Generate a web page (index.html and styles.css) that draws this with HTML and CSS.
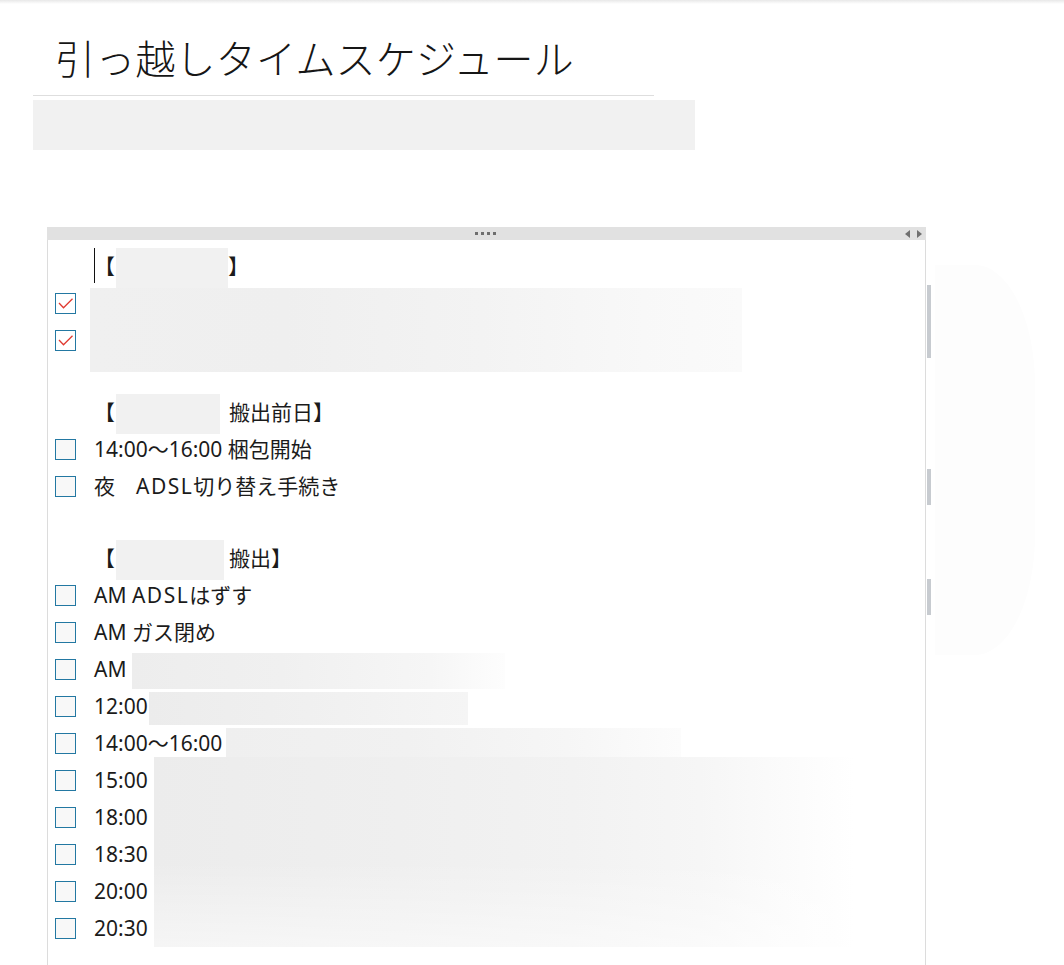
FILE: index.html
```html
<!DOCTYPE html>
<html lang="ja">
<head>
<meta charset="utf-8">
<title>引っ越しタイムスケジュール</title>
<link rel="stylesheet" href="styles.css">
</head>
<body>
<div class="topshade"></div>
<header class="page-header">
  <h1 class="title">引っ越しタイムスケジュール</h1>
</header>
<div class="redact redact-subtitle"></div>

<section class="panel">
  <div class="panel-bar">
    <span class="grip"><i></i><i></i><i></i><i></i></span>
    <svg class="arrows" width="17" height="8" viewBox="0 0 17 8"><polygon points="5,0 0,4 5,8" /><polygon points="12,0 17,4 12,8" /></svg>
  </div>
  <div class="panel-body">
    <div class="line heading has-caret">【<span class="redact rh rh1"></span>】</div>
    <div class="line item"><span class="box checked"><svg viewBox="0 0 21 21" width="21" height="21"><polyline points="4,10 8.5,14.8 17.5,5.8" /></svg></span><span class="txt"></span></div>
    <div class="line item"><span class="box checked"><svg viewBox="0 0 21 21" width="21" height="21"><polyline points="4,10 8.5,14.8 17.5,5.8" /></svg></span><span class="txt"></span></div>
    <div class="line blank"></div>
    <div class="line heading">【<span class="redact rh rh2"></span>搬出前日】</div>
    <div class="line item"><span class="box"></span><span class="txt">14:00〜16:00 梱包開始</span></div>
    <div class="line item"><span class="box"></span><span class="txt">夜　<span class="wide">ADSL</span>切り替え手続き</span></div>
    <div class="line blank"></div>
    <div class="line heading">【<span class="redact rh rh3"></span>搬出】</div>
    <div class="line item"><span class="box"></span><span class="txt">AM <span class="wide">ADSL</span>はずす</span></div>
    <div class="line item"><span class="box"></span><span class="txt">AM ガス閉め</span></div>
    <div class="line item"><span class="box"></span><span class="txt">AM<span class="redact ri ri-am"></span></span></div>
    <div class="line item"><span class="box"></span><span class="txt">12:00<span class="redact ri ri-12"></span></span></div>
    <div class="line item"><span class="box"></span><span class="txt">14:00〜16:00<span class="redact ri ri-14"></span></span></div>
    <div class="line item"><span class="box"></span><span class="txt">15:00</span></div>
    <div class="line item"><span class="box"></span><span class="txt">18:00</span></div>
    <div class="line item"><span class="box"></span><span class="txt">18:30</span></div>
    <div class="line item"><span class="box"></span><span class="txt">20:00</span></div>
    <div class="line item"><span class="box"></span><span class="txt">20:30</span></div>

    <div class="redact block block-a"></div>
    <div class="redact block block-b"></div>
  </div>
  <span class="scroll-mark m1"></span>
  <span class="scroll-mark m2"></span>
  <span class="scroll-mark m3"></span>
</section>
<div class="ghost"></div>
</body>
</html>
```

FILE: styles.css
```css
html, body {
  margin: 0;
  padding: 0;
  background: #ffffff;
}

body {
  position: relative;
  font-family: "Noto Sans", "Noto Sans CJK JP", sans-serif;
  color: #1b1b1b;
  overflow: hidden;
  min-height: 965px;
}

.topshade {
  height: 4px;
  background: linear-gradient(to bottom, #e8e8e8, #ffffff);
}

.page-header {
  margin-left: 33px;
  width: 621px;
  padding: 29px 0 14px 22px;
  box-sizing: border-box;
  border-bottom: 1px solid #dedede;
}

.title {
  margin: 0;
  font-family: "Noto Sans CJK JP", sans-serif;
  font-weight: 300;
  font-size: 40px;
  line-height: 48px;
  color: #161616;
  letter-spacing: 0.2px;
}

.redact-subtitle {
  margin: 4px 0 0 33px;
  width: 662px;
  height: 50px;
  background: linear-gradient(90deg, #f5f5f5 0%, #f2f2f2 35%, #f4f4f4 60%, #f9f9f9 80%, #fdfdfd 92%, #ffffff 100%);
}

.panel {
  position: relative;
  margin: 77px 0 0 47px;
  width: 879px;
  box-sizing: border-box;
  border-left: 1px solid #dcdcdc;
  border-right: 1px solid #dcdcdc;
}

.panel-bar {
  display: grid;
  grid-template-columns: 1fr auto 1fr;
  align-items: center;
  height: 13px;
  margin: 0 -1px;
  background: #e1e1e1;
}

.grip {
  grid-column: 2;
  display: flex;
  gap: 3px;
  margin-left: -2px;
}

.grip i {
  display: block;
  width: 3px;
  height: 3px;
  background: #6e6e6e;
}

.arrows {
  grid-column: 3;
  justify-self: end;
  margin-right: 4px;
  fill: #707070;
}

.panel-body {
  position: relative;
  padding: 8px 0 30px 0;
  font-size: 21px;
  line-height: 37px;
}

.line {
  height: 37px;
  display: flex;
  align-items: center;
  white-space: nowrap;
}

.line.blank {
  height: 35px;
}

.heading {
  padding-left: 46px;
  display: block;
}

.has-caret {
  position: relative;
}

.has-caret::before {
  content: "";
  position: absolute;
  left: 46px;
  top: 0;
  width: 1px;
  height: 35px;
  background: #111;
}

.item {
  padding-left: 7px;
}

.box {
  flex: none;
  width: 21px;
  height: 21px;
  box-sizing: border-box;
  border: 1px solid #2378a2;
  background: #f8f8f8;
  margin-right: 18px;
  position: relative;
}

.box.checked {
  background: #ffffff;
}

.box svg {
  position: absolute;
  left: -1px;
  top: -1px;
  fill: none;
  stroke: #e03a30;
  stroke-width: 1.3;
}

.txt {
  display: inline-block;
}

.wide {
  letter-spacing: 1.5px;
}

.redact {
  background: #f1f1f1;
}

.rh {
  display: inline-block;
  height: 40px;
  margin: -2px 0;
  vertical-align: middle;
}

.rh1 { width: 112px; margin-left: 1px; }
.rh2 { width: 104px; margin-left: 1px; margin-right: 9px; }
.rh3 { width: 108px; margin-left: 1px; margin-right: 5px; }

.ri {
  display: inline-block;
  vertical-align: middle;
  margin-top: -2px;
  margin-bottom: -2px;
}

.ri-am {
  width: 373px;
  height: 36px;
  margin-left: 6px;
  background: linear-gradient(90deg, #ededed 0%, #f0f0f0 40%, #f6f6f6 80%, #fdfdfd 100%);
}

.ri-12 {
  width: 319px;
  height: 33px;
  margin-left: 1px;
  background: linear-gradient(90deg, #ececec 0%, #f0f0f0 50%, #f5f5f5 100%);
}

.ri-14 {
  width: 455px;
  height: 34px;
  margin-left: 4px;
  background: linear-gradient(90deg, #efefef 0%, #f1f1f1 40%, #f6f6f6 75%, #fcfcfc 100%);
}

.block {
  position: absolute;
}

.block-a {
  left: 42px;
  top: 48px;
  width: 652px;
  height: 84px;
  background: linear-gradient(90deg, #f0f0f0 0%, #efefef 30%, #f3f3f3 60%, #f8f8f8 85%, #fafafa 100%);
}

.block-b {
  left: 106px;
  top: 517px;
  width: 700px;
  height: 190px;
  background:
    linear-gradient(180deg, rgba(255,255,255,0) 55%, rgba(255,255,255,0.5) 100%),
    linear-gradient(90deg, #ececec 0%, #efefef 35%, #f2f2f2 60%, #f6f6f6 78%, #fbfbfb 90%, #ffffff 100%);
}

.scroll-mark {
  position: absolute;
  right: -6px;
  width: 4px;
  background: #c7cbd0;
}

.m1 { top: 58px; height: 73px; }
.m2 { top: 242px; height: 36px; }
.m3 { top: 352px; height: 36px; }

.ghost {
  position: absolute;
  left: 935px;
  top: 265px;
  width: 100px;
  height: 390px;
  border-radius: 0 60px 60px 0 / 0 120px 120px 0;
  background: #fdfdfd;
}
```
